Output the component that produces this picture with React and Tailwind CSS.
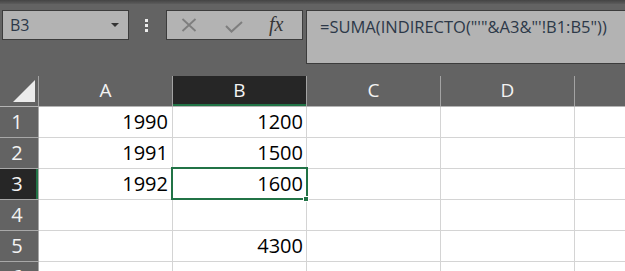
import React from "react";

const font = { fontFamily: '"Open Sans", "Noto Sans", sans-serif' };

function HeaderCell({ label, selected, last }) {
  return (
    <div
      className={
        "relative flex h-full shrink-0 items-center justify-center text-[19px] text-[#f3f3f3] " +
        (last ? "w-[60px] " : "w-[134px] border-r border-[#a3a3a3] ") +
        (selected ? "bg-[#262626]" : "bg-[#636363]")
      }
    >
      <span className="-mt-[1px]">{label}</span>
      {selected && <div className="absolute bottom-0 left-0 right-0 h-[2px] bg-[#217346]" />}
    </div>
  );
}

function Row({ n, a, b, selected }) {
  return (
    <div className="flex h-[31px] shrink-0">
      <div
        className={
          "relative flex w-[39px] shrink-0 items-center justify-center border-b border-r border-[#a8a8a8] pr-[4px] text-[20px] text-[#f3f3f3] " +
          (selected ? "bg-[#262626]" : "bg-[#636363]")
        }
      >
        {n}
        {selected && <div className="absolute bottom-0 right-0 top-0 w-[2px] bg-[#217346]" />}
      </div>
      <div className="flex w-[134px] shrink-0 items-center justify-end border-b border-r border-[#d4d4d4] bg-white pr-[4px] text-[20px] text-black">
        {a}
      </div>
      <div className="flex w-[134px] shrink-0 items-center justify-end border-b border-r border-[#d4d4d4] bg-white pr-[3px] text-[20px] text-black">
        {b}
      </div>
      <div className="w-[134px] shrink-0 border-b border-r border-[#d4d4d4] bg-white" />
      <div className="w-[134px] shrink-0 border-b border-r border-[#d4d4d4] bg-white" />
      <div className="w-[60px] shrink-0 border-b border-[#d4d4d4] bg-white" />
    </div>
  );
}

export default function App() {
  return (
    <div className="relative h-[271px] w-[625px] overflow-hidden bg-[#636363]" style={font}>
      <div className="h-[4px] bg-gradient-to-b from-[#444444] to-[#5c5c5c]" />
      {/* toolbar */}
      <div className="mt-[6px] flex h-[66px] items-start">
        <div className="ml-[2px] flex h-[30px] w-[127px] shrink-0 items-center justify-between border border-[#3c3c3c] bg-[#b3b3b3] pl-[7px] pr-[9px]">
          <span className="text-[16px] text-[#2c3848]">B3</span>
          <svg width="8" height="4" viewBox="0 0 8 4">
            <path d="M0 0 L8 0 L4 4 Z" fill="#333333" />
          </svg>
        </div>
        <div className="flex h-[30px] w-[37px] shrink-0 flex-col items-center justify-center gap-[2px] pr-[2px]">
          <div className="h-[3px] w-[3px] bg-[#ececec]" />
          <div className="h-[3px] w-[3px] bg-[#ececec]" />
          <div className="h-[3px] w-[3px] bg-[#ececec]" />
        </div>
        <div className="flex h-[30px] w-[137px] shrink-0 items-center border border-[#3c3c3c] bg-[#b3b3b3]">
          <svg className="ml-[14px]" width="16" height="14" viewBox="0 0 16 14">
            <path d="M1.5 1 L14.5 13 M14.5 1 L1.5 13" stroke="#7e7e7e" strokeWidth="1.8" fill="none" />
          </svg>
          <svg className="ml-[28px] mt-[3px]" width="18" height="12" viewBox="0 0 18 12">
            <path d="M1 5 L6.5 10.5 L17 1" stroke="#7e7e7e" strokeWidth="2" fill="none" />
          </svg>
          <span
            className="ml-[26px] -mt-[2px] text-[20px] italic leading-none text-[#363636]"
            style={{ fontFamily: '"Liberation Serif", "DejaVu Serif", serif' }}
          >
            fx
          </span>
        </div>
        <div className="ml-[3px] h-[54px] w-[340px] shrink-0 border border-[#3c3c3c] bg-[#b3b3b3] pl-[13px] pt-[4px] text-[16.5px] text-[#2c3848]">
          =SUMA(INDIRECTO("'"&amp;A3&amp;"'!B1:B5"))
        </div>
      </div>
      {/* grid */}
      <div className="flex flex-col">
        <div className="flex h-[31px] shrink-0 border-b border-[#b4b4b4]">
          <div className="relative w-[39px] shrink-0 border-r border-[#a3a3a3] bg-[#636363]">
            <svg className="absolute left-[13px] top-[4px]" width="22" height="22" viewBox="0 0 22 22">
              <path d="M22 0 L22 22 L0 22 Z" fill="#ececec" />
            </svg>
          </div>
          <HeaderCell label="A" />
          <HeaderCell label="B" selected />
          <HeaderCell label="C" />
          <HeaderCell label="D" />
          <HeaderCell label="" last />
        </div>
        <Row n="1" a="1990" b="1200" />
        <Row n="2" a="1991" b="1500" />
        <Row n="3" a="1992" b="1600" selected />
        <Row n="4" a="" b="" />
        <Row n="5" a="" b="4300" />
        <Row n="6" a="" b="" />
      </div>
      {/* selection overlay */}
      <div className="pointer-events-none absolute left-[171px] top-[167px] h-[33px] w-[137px] border-2 border-[#217346]" />
      <div className="pointer-events-none absolute left-[303px] top-[196px] h-[6px] w-[6px] border border-white bg-[#217346]" />
    </div>
  );
}
